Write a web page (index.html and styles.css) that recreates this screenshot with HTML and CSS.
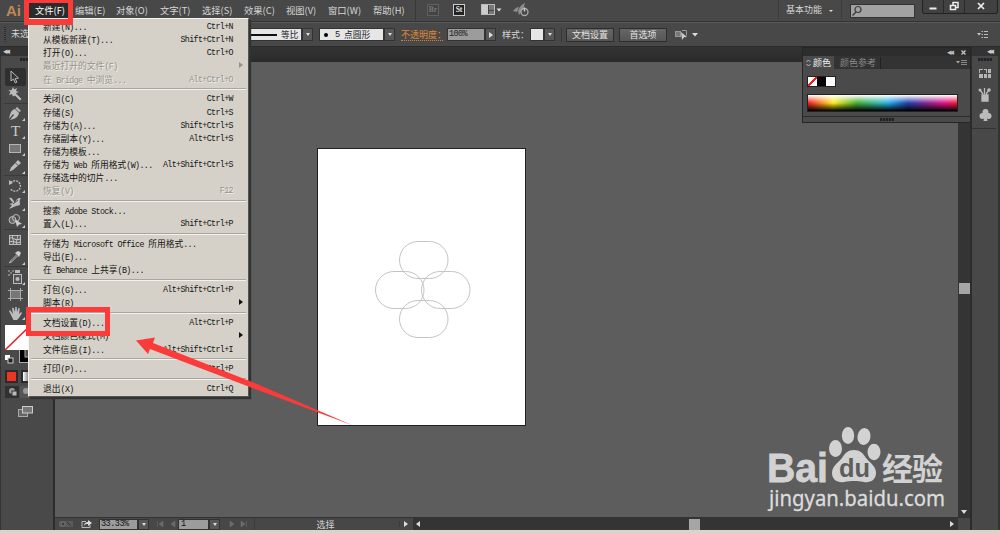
FILE: index.html
```html
<!DOCTYPE html>
<html lang="zh-CN">

<head>
    <meta charset="UTF-8">
    <meta name="viewport" content="width=device-width, initial-scale=1.0">
    <title>Ai</title>
    <link rel="stylesheet" href="styles.css">
</head>

<body>
    <div class="app">
        <header class="menubar">
            <div class="logo">Ai</div>
            <nav class="menus">
                <span class="open">文件(F)</span>
                <span>编辑(E)</span>
                <span>对象(O)</span>
                <span>文字(T)</span>
                <span>选择(S)</span>
                <span>效果(C)</span>
                <span>视图(V)</span>
                <span>窗口(W)</span>
                <span>帮助(H)</span>
            </nav>
            <div class="bar-icons">
                <span class="badge dim">Br</span>
                <span class="badge">St</span>
                <svg class="layout-icon" width="22" height="12" viewBox="0 0 22 12">
                    <rect x="0.5" y="0.5" width="13" height="10" fill="#777" stroke="#bbb"/>
                    <rect x="1" y="1" width="6" height="9" fill="#ccc"/>
                    <path d="M7.500 1v9M8 6.500h5" stroke="#444"/>
                    <path d="M15.500 4.500h5l-2.500 3z" fill="#ddd"/>
                </svg>
                <svg width="18" height="14" viewBox="0 0 18 14">
                    <path d="M0 8 Q3 4 6 4 L4 9zM5 8 Q7 2 12 0 L10 7 L6 12z" fill="#8e8e8e"/>
                    <circle cx="11.500" cy="9" r="3.500" fill="#4a4a4a" stroke="#aaa" stroke-width="1.300"/>
                    <path d="M11.500 4.500v4" stroke="#ccc" stroke-width="1.300"/>
                </svg>
            </div>
            <div class="workspace">基本功能<i class="down small"></i></div>
            <div class="search">
                <svg width="12" height="12" viewBox="0 0 12 12">
                    <circle cx="7" cy="4.500" r="3" fill="none" stroke="#3c3c3c" stroke-width="1.200"/>
                    <path d="M5 7 1.500 10.500" stroke="#3c3c3c" stroke-width="1.500"/>
                </svg>
            </div>
            <div class="window-buttons">
                <span><svg width="12" height="12" viewBox="0 0 12 12"><path d="M2.500 7.500h7" stroke="#eee" stroke-width="2"/></svg></span>
                <span><svg width="12" height="12" viewBox="0 0 12 12"><path d="M5 4V1.500h5v5H8M2.500 4.500h5v4h-5z" fill="none" stroke="#eee" stroke-width="1.500"/></svg></span>
                <span><svg width="12" height="12" viewBox="0 0 12 12"><path d="m3 2 6 6m0-6-6 6" stroke="#eee" stroke-width="1.700"/></svg></span>
            </div>
        </header>

        <div class="control">
            <i class="grip"></i>
            <span class="selection">未选</span>
            <div class="field stroke"><i class="line"></i>等比</div>
            <b class="drop"><i class="down"></i></b>
            <div class="field brush"><i class="dot"></i><span>5</span>点圆形</div>
            <b class="drop"><i class="down"></i></b>
            <span class="opacity">不透明度：</span>
            <div class="field percent">100%</div>
            <b class="drop"><i class="right"></i></b>
            <span class="style-label">样式：</span>
            <div class="field swatch"></div>
            <b class="drop"><i class="down"></i></b>
            <div class="buttons">
                <span>文档设置</span>
                <span>首选项</span>
            </div>
            <svg class="align-icon" width="24" height="12" viewBox="0 0 24 12">
                <rect x="0.500" y="2.500" width="5" height="5" fill="#777" stroke="#999"/>
                <path d="M7 1.500h4.500v5" stroke="#999" fill="none"/>
                <path d="m6 3 6 5-3 .3L7 11z" fill="#ccc"/>
                <path d="M17 4h6l-3 3.500z" fill="#ddd"/>
            </svg>
            <svg class="flyout" width="12" height="9" viewBox="0 0 12 9">
                <path d="M0 3h4L2 5.500z" fill="#ccc"/>
                <path d="M4.500 1.500h1.500M7 1.500h4M4.500 4.500h1.500M7 4.500h4M4.500 7.500h1.500M7 7.500h4" stroke="#bbb"/>
            </svg>
        </div>

        <div class="workarea">
            <aside class="tools">
                <div class="dock-head left">◂◂</div>
                <i class="handle"></i>
                <div class="tool active"><svg width="20" height="16" viewBox="0 0 20 16"><path d="M7 2v10l2.500-2 1.800 4 1.500-.8-1.600-3.700 3.300-.4z" fill="#333" stroke="#bbb"/></svg></div>
                <div class="tool"><svg width="20" height="16" viewBox="0 0 20 16"><path d="m8 1 1.200 2.500L12 2l-1 3 3 1-3 1 .5 1 5 5-1.500 1.500-5-5L8 10.500 7 8l-3 1 1.500-3L3.500 4l3 .2z" fill="#bdbdbd"/></svg></div>
                <hr>
                <div class="tool more"><svg width="20" height="16" viewBox="0 0 20 16"><path d="m12 1 4 4-2 1-3.500-3.500zM10 3l4 4c-1 4-4 6-9 7l4-5-1-1-4 5C5 8 6 4 10 3z" fill="#bdbdbd"/></svg></div>
                <div class="tool more type">T</div>
                <div class="tool more"><svg width="20" height="16" viewBox="0 0 20 16"><rect x="4.500" y="3.500" width="11" height="8" fill="#777" stroke="#b5b5b5"/></svg></div>
                <div class="tool more"><svg width="20" height="16" viewBox="0 0 20 16"><path d="m13 2 3 3-8 7-3.500 1.500L6 9.500z" fill="#bdbdbd"/><path d="m10 4.500 3 3" stroke="#555"/></svg></div>
                <hr>
                <div class="tool more"><svg width="20" height="16" viewBox="0 0 20 16"><path d="M5.500 4.500C11 0 17 5 15 10c-1.500 4-7 4-9.500 1" fill="none" stroke="#bbb" stroke-width="1.300" stroke-dasharray="2 1"/><path d="M4 2v5l4-2z" fill="#bbb"/></svg></div>
                <div class="tool more"><svg width="20" height="16" viewBox="0 0 20 16"><path d="M4 3c4-1 4 3 6 5 1-3 2-5 6-5-2 2-1 4-1 7l-4 1-7 3 3-4-3-1 4-1z" fill="#bdbdbd"/><path d="m8 9 5-4" stroke="#555"/></svg></div>
                <div class="tool more"><svg width="20" height="16" viewBox="0 0 20 16"><circle cx="7.500" cy="7" r="3.500" fill="#666" stroke="#bbb"/><circle cx="11" cy="5" r="3.500" fill="none" stroke="#bbb"/><path d="m10 6 7 5-3 .5L12 14z" fill="#ccc"/></svg></div>
                <hr>
                <div class="tool"><svg width="20" height="16" viewBox="0 0 20 16"><rect x="4.500" y="3.500" width="11" height="9" fill="#5e5e5e" stroke="#bbb"/><path d="M4 7c4-4 5 3 11 0M4 10c5-2 7 2 11 0M8 3c-2 4 2 5 0 9M12 3c2 4-2 5 0 9" fill="none" stroke="#ccc"/></svg></div>
                <div class="tool more"><svg width="20" height="16" viewBox="0 0 20 16"><path d="m10 4 4 4 1-2 1-2-2-2-2 .5z" fill="#ccc"/><path d="m11.500 6-6 6-1 2 2-1 6-6" fill="none" stroke="#bbb"/></svg></div>
                <hr>
                <div class="tool more"><svg width="20" height="16" viewBox="0 0 20 16"><rect x="8.500" y="5.500" width="8" height="9" fill="#555" stroke="#bbb"/><circle cx="12.500" cy="10" r="2" fill="#bbb"/><path d="M10 4V1h5v3z" fill="#bbb"/><path d="M3 2h2M7 2h2M5 4h2M3 6h2" stroke="#bbb"/></svg></div>
                <div class="tool"><svg width="20" height="16" viewBox="0 0 20 16"><rect x="6" y="5" width="9" height="7" fill="#777"/><path d="M3 4.500h15M3 12.500h15M5.500 2v13M15.500 2v13" stroke="#aaa"/></svg></div>
                <div class="tool more"><svg width="20" height="16" viewBox="0 0 20 16"><path d="m4 7 1-1 3 4-1-6 1.500-.3L10 8l.3-5h1.400L12 8l1.500-4 1.300.3L14 10l2-2 1 1-3 5-2 2H8.500z" fill="#bdbdbd"/></svg></div>
                <div class="colors">
                    <svg width="48" height="41" viewBox="0 0 48 41">
                        <rect x="14.500" y="15.500" width="26" height="23" fill="#000" stroke="#aaa"/>
                        <rect x="20" y="20" width="14" height="13" fill="#4a4a4a" stroke="#aaa"/>
                        <rect x="0" y="1" width="27" height="25" fill="#fff"/>
                        <path d="M0 26 27 0" stroke="#f01820" stroke-width="1.500"/>
                        <rect x="0" y="31" width="5" height="5" fill="#fff"/>
                        <rect x="3" y="34" width="5" height="5" fill="#222" stroke="#ccc"/>
                    </svg>
                </div>
                <div class="modes"><i class="red"></i><i class="grad"></i></div>
                <div class="draw"><svg width="48" height="12" viewBox="0 0 48 12"><path d="M0 0h14v12H0z" fill="#303030"/><path d="M15 0h28v12H15z" fill="#555"/><circle cx="7" cy="5" r="3" fill="#999"/><rect x="7" y="5" width="5" height="5" fill="#bbb" stroke="#333"/><circle cx="21" cy="5" r="3" fill="#999"/></svg></div>
                <svg class="screen-icon" width="18" height="14" viewBox="0 0 18 14">
                    <rect x="1.500" y="4.500" width="9" height="7" fill="#666" stroke="#aaa"/>
                    <rect x="5.500" y="1.500" width="10" height="6.500" fill="#777" stroke="#ccc"/>
                </svg>
            </aside>

            <main class="document">
                <div class="tabs"></div>
                <div class="stage">
                    <div class="canvas">
                        <svg class="artboard" width="210" height="279" viewBox="0 0 210 279">
                            <rect x="0.500" y="0.500" width="208" height="277" fill="#fff" stroke="#222"/>
                            <g fill="none" stroke="#c4c4c4" stroke-width="1">
                                <rect x="82.500" y="93.500" width="48.500" height="37" rx="18.500"/>
                                <rect x="58.500" y="123.500" width="48.500" height="37" rx="18.500"/>
                                <rect x="104.500" y="123.500" width="48.500" height="37" rx="18.500"/>
                                <rect x="82.500" y="152.500" width="48.500" height="37" rx="18.500"/>
                            </g>
                        </svg>
                    </div>
                    <div class="vscroll"><i class="thumb"></i><i class="down"></i></div>
                </div>
                <footer class="status">
                    <svg width="36" height="10" viewBox="0 0 36 10">
                        <path d="M2 2h14v6H2z" fill="#5b5b5b"/><circle cx="6" cy="5" r="2" fill="#3b3b3b" stroke="#777"/><path d="m10 3 4 4" stroke="#333"/>
                        <path d="M29 2.500h-4v6h8V6" fill="none" stroke="#bbb"/><path d="M27 7c0-3 2-4 4-4V1l4 3-4 3V5c-2 0-3 0-4 2z" fill="#ddd"/>
                    </svg>
                    <div class="field zoom">33.33%</div>
                    <b class="drop"><i class="down"></i></b>
                    <svg width="26" height="10" viewBox="0 0 26 10"><path d="M6.500 2v6M12 2v6L8 5zM24 2v6l-4-3z" fill="#6b6b6b" stroke="#6b6b6b" stroke-width=".6"/></svg>
                    <div class="field page">1</div>
                    <b class="drop"><i class="down"></i></b>
                    <svg width="32" height="10" viewBox="0 0 32 10"><path d="M8 2v6l4-3zM19 2v6l4-3zM24.500 2v6" fill="#6b6b6b" stroke="#6b6b6b" stroke-width=".6"/></svg>
                    <div class="current">选择</div>
                    <b class="next"><i class="right"></i></b>
                    <div class="hscroll"><i class="left-arrow"></i><i class="thumb"></i><i class="right"></i></div>
                    <i class="corner"></i>
                </footer>
            </main>

            <aside class="dock">
                <div class="dock-head">◂◂</div>
                <i class="handle"></i>
                <svg width="24" height="70" viewBox="0 0 24 70">
                    <rect x="7" y="8" width="12" height="9" fill="#b5b5b5"/>
                    <path d="M8 9h3v3H8zM12 9h2v3h-2z" fill="#444"/><path d="M11.500 8v9M15.500 8v9M7 12.500h12" stroke="#444"/>
                    <path d="M10 34h6v6h-6zM11 33 8 29M12.500 33v-6M14 33l3-4" fill="#bbb" stroke="#bbb" stroke-width="1.300"/>
                    <circle cx="8" cy="29" r="1.500" fill="#bbb"/><circle cx="17" cy="29" r="1.800" fill="#bbb"/>
                    <g fill="#bbb"><circle cx="13.500" cy="51" r="3"/><circle cx="10.500" cy="55" r="3"/><circle cx="16.500" cy="55" r="3"/><path d="M13 52h1l1.500 8h-4z"/></g>
                    <path d="M0 67.500h24" stroke="#333"/>
                </svg>
            </aside>
        </div>
        <div class="taskbar"></div>
    </div>

    <div class="color-panel">
        <div class="panel-head"><span>◂◂</span><svg width="7" height="7" viewBox="0 0 7 7"><path d="m1.500 1.500 4 4m0-4-4 4" stroke="#ccc" stroke-width="1.200"/></svg></div>
        <div class="panel-tabs">
            <span class="current-tab"><svg width="5" height="8" viewBox="0 0 5 8"><path d="M.5 3 2.500 1l2 2M.5 5l2 2 2-2" fill="none" stroke="#bbb"/></svg>颜色</span>
            <span class="tab">颜色参考</span>
            <svg width="12" height="7" viewBox="0 0 12 7"><path d="M0 2h4L2 4.500z" fill="#aaa"/><path d="M5 1.500h6M5 3.500h6M5 5.500h6" stroke="#888"/></svg>
        </div>
        <div class="swatches"><i class="none"></i><i class="black"></i><i class="white"></i></div>
        <div class="spectrum"></div>
        <div class="panel-foot"><i class="handle"></i></div>
    </div>

    <div class="watermark">
        <svg width="200" height="96" viewBox="0 0 200 96">
            <g fill="#d2d2d2">
                <text class="wm-brand" x="1" y="57.500" textLength="61" lengthAdjust="spacingAndGlyphs">Bai</text>
                <ellipse cx="69.500" cy="24.500" rx="6.500" ry="8.500"/>
                <ellipse cx="82" cy="11.500" rx="6.200" ry="8.500"/>
                <ellipse cx="98" cy="12.500" rx="6.500" ry="8.500" transform="rotate(10 98 12.500)"/>
                <ellipse cx="108" cy="28" rx="6.500" ry="8.300"/>
                <path d="M88 26c6 0 9 3 12 8 4 5 10 8 10 15 0 7-6 10-12 9-4-1-7-1-10-1s-6 0-10 1c-6 1-12-2-12-9s6-10 10-15c3-5 6-8 12-8z"/>
            </g>
            <text class="wm-du" x="73" y="53" textLength="31" lengthAdjust="spacingAndGlyphs">du</text>
            <text class="wm-cn" x="116" y="56" textLength="61">经验</text>
            <text class="wm-url" x="3" y="81.500" textLength="176" lengthAdjust="spacingAndGlyphs">jingyan.baidu.com</text>
        </svg>
    </div>

    <div class="file-menu">
        <div class="item"><span>新建<em>(N)...</em></span><kbd>Ctrl+N</kbd></div>
        <div class="item"><span>从模板新建<em>(T)...</em></span><kbd>Shift+Ctrl+N</kbd></div>
        <div class="item"><span>打开<em>(O)...</em></span><kbd>Ctrl+O</kbd></div>
        <div class="item disabled sub"><span>最近打开的文件<em>(F)</em></span></div>
        <div class="item disabled"><span>在<em> Bridge </em>中浏览<em>...</em></span><kbd>Alt+Ctrl+O</kbd></div>
        <div class="sep"></div>
        <div class="item"><span>关闭<em>(C)</em></span><kbd>Ctrl+W</kbd></div>
        <div class="item"><span>存储<em>(S)</em></span><kbd>Ctrl+S</kbd></div>
        <div class="item"><span>存储为<em>(A)...</em></span><kbd>Shift+Ctrl+S</kbd></div>
        <div class="item"><span>存储副本<em>(Y)...</em></span><kbd>Alt+Ctrl+S</kbd></div>
        <div class="item"><span>存储为模板<em>...</em></span></div>
        <div class="item"><span>存储为<em> Web </em>所用格式<em>(W)...</em></span><kbd>Alt+Shift+Ctrl+S</kbd></div>
        <div class="item"><span>存储选中的切片<em>...</em></span></div>
        <div class="item disabled"><span>恢复<em>(V)</em></span><kbd>F12</kbd></div>
        <div class="sep"></div>
        <div class="item"><span>搜索<em> Adobe Stock...</em></span></div>
        <div class="item"><span>置入<em>(L)...</em></span><kbd>Shift+Ctrl+P</kbd></div>
        <div class="sep"></div>
        <div class="item"><span>存储为<em> Microsoft Office </em>所用格式<em>...</em></span></div>
        <div class="item"><span>导出<em>(E)...</em></span></div>
        <div class="item"><span>在<em> Behance </em>上共享<em>(B)...</em></span></div>
        <div class="sep"></div>
        <div class="item"><span>打包<em>(G)...</em></span><kbd>Alt+Shift+Ctrl+P</kbd></div>
        <div class="item sub"><span>脚本<em>(R)</em></span></div>
        <div class="sep"></div>
        <div class="item"><span>文档设置<em>(D)...</em></span><kbd>Alt+Ctrl+P</kbd></div>
        <div class="item sub"><span>文档颜色模式<em>(M)</em></span></div>
        <div class="item"><span>文件信息<em>(I)...</em></span><kbd>Alt+Shift+Ctrl+I</kbd></div>
        <div class="sep"></div>
        <div class="item"><span>打印<em>(P)...</em></span><kbd>Ctrl+P</kbd></div>
        <div class="sep"></div>
        <div class="item"><span>退出<em>(X)</em></span><kbd>Ctrl+Q</kbd></div>
    </div>

    <div class="mark mark-file"></div>
    <div class="mark mark-setup"></div>
    <svg class="arrow" width="220" height="92" viewBox="0 0 220 92">
        <path d="M1 5.500 20 2.500 18 8 122 49 218 90.500 120 54 15 14 13 19z" fill="#fb3a3a"/>
    </svg>
</body>

</html>
```
FILE: styles.css
```css
body {
    margin: 0;
    overflow: hidden;
    font-family: "Noto Sans CJK SC", sans-serif;
    font-size: 9px;
    line-height: 12px;
    color: #d6d6d6;
}

svg {
    display: block;
    flex: none;
}

i, em {
    font-style: normal;
}

.app {
    display: flex;
    flex-direction: column;
    width: 1000px;
    height: 533px;
    background-color: #484848;
}

/* menu bar */
.menubar {
    display: flex;
    flex: none;
    height: 22px;
    border-bottom: 1px solid #333;
    box-sizing: border-box;
}

.logo {
    width: 29px;
    padding-left: 6px;
    box-sizing: border-box;
    font: bold 15px/21px "Liberation Sans", sans-serif;
    color: #c38659;
}

.menus {
    display: grid;
    grid-template-columns: 40px 41px 44px 42px 42px 42px 42px 45px 48px;
    font-size: 9.3px;
    line-height: 20px;
}

.menus span {
    padding-left: 6px;
    white-space: nowrap;
}

.menus .open {
    background-color: #2b2b2b;
    color: #fff;
}

.bar-icons {
    display: flex;
    align-items: center;
    height: 20px;
    width: 270px;
    border-left: 1px solid #383838;
    padding-left: 11px;
}

.badge {
    width: 10px;
    height: 10px;
    margin-right: 14px;
    border: 1px solid #ccc;
    background-color: #222;
    font: bold 7.5px/10px "Liberation Serif", serif;
    text-align: center;
    color: #eee;
}

.badge.dim {
    border-color: #606060;
    background-color: #444;
    color: #777;
}

.layout-icon {
    margin: 0 10px 0 2px;
}

.workspace {
    display: flex;
    align-items: center;
    width: 64px;
    height: 19px;
    border-left: 1px solid #3a3a3a;
    border-right: 1px solid #3a3a3a;
    padding-left: 7px;
    margin-left: auto;
    box-sizing: border-box;
}

.workspace .down {
    margin: 3px 0 0 7px;
}

.search {
    width: 65px;
    height: 14px;
    margin: 4px 7px 0 8px;
    background-color: #a2a2a2;
    border: 1px solid #333;
    box-sizing: border-box;
}

.window-buttons {
    display: flex;
    height: 13px;
    margin-right: 2px;
    border: 1px solid #222;
    border-top: 0;
    border-radius: 0 0 3px 3px;
    background-color: #414141;
}

.window-buttons span {
    width: 20px;
    padding-top: 1px;
    border-right: 1px solid #2a2a2a;
    display: flex;
    justify-content: center;
}

.window-buttons span:last-child {
    width: 32px;
    border-right: 0;
}

/* arrows used in drop buttons and scroll bars */
.down {
    border: 2.5px solid transparent;
    border-top: 3px solid #ddd;
    border-bottom: 0;
}

.down.small {
    border-width: 2px;
    border-top-width: 2px;
    border-bottom: 0;
}

.right {
    border: 3px solid transparent;
    border-left: 4px solid #ddd;
    border-right: 0;
}

.left-arrow {
    border: 3px solid transparent;
    border-right: 4px solid #ddd;
    border-left: 0;
}

/* control bar */
.control {
    display: flex;
    flex: none;
    align-items: center;
    height: 25px;
    border-top: 1px solid #595959;
    border-bottom: 1px solid #2a2a2a;
    box-sizing: border-box;
    white-space: nowrap;
}

.grip {
    width: 2px;
    height: 15px;
    margin: 0 5px 0 4px;
    background: repeating-linear-gradient(#2d2d2d 0 1px, #4a4a4a 1px 2px);
}

.selection {
    width: 233px;
    line-height: 10px;
    margin-bottom: 2px;
}

.field {
    display: flex;
    align-items: center;
    height: 13px;
    border: 1px solid #333;
    box-sizing: border-box;
    background-color: #e6e6e6;
    color: #222;
    font-size: 8.7px;
}

.stroke {
    width: 58px;
}

.line {
    width: 32px;
    height: 2px;
    margin-right: 4px;
    background-color: #111;
}

.drop {
    display: flex;
    align-items: center;
    justify-content: center;
    width: 11px;
    height: 13px;
    border: 1px solid #333;
    box-sizing: border-box;
    background-color: #575757;
}

.brush {
    width: 65px;
    margin-left: 6px;
}

.brush span {
    width: 9px;
    font-family: "Liberation Mono", monospace;
}

.dot {
    width: 4px;
    height: 4px;
    margin: 0 7px 0 4px;
    border-radius: 50%;
    background-color: #000;
}

.opacity {
    width: 42px;
    height: 11px;
    margin: 0 4px 0 6px;
    line-height: 11px;
    border-bottom: 1px dotted #d8802c;
    font-size: 9px;
    color: #e08a35;
}

.percent {
    width: 38px;
    padding-left: 1px;
    background-color: #9c9c9c;
    font: 8.5px/11px "Liberation Mono", monospace;
    letter-spacing: -.6px;
}

.style-label {
    width: 28px;
    margin-left: 6px;
}

.swatch {
    width: 14px;
}

.buttons {
    display: flex;
    gap: 5px;
    margin-left: 6px;
    padding-left: 4px;
    border-left: 1px solid #383838;
}

.buttons span {
    width: 46px;
    height: 12px;
    border: 1px solid #2d2d2d;
    background: linear-gradient(#666, #555);
    line-height: 12px;
    text-align: center;
    color: #e2e2e2;
}

.align-icon {
    margin-left: 8px;
}

.flyout {
    margin: 0 11px 0 auto;
}

/* tools */
.workarea {
    display: flex;
    flex: none;
    height: 483px;
}

.tools {
    display: flex;
    flex-direction: column;
    width: 52px;
    border-left: 1px solid #333;
    background-color: #494949;
}

.dock-head {
    height: 9px;
    background-color: #333;
    font: 9px/9px "DejaVu Sans", sans-serif;
    letter-spacing: -2px;
    text-align: right;
    padding-right: 6px;
    color: #ccc;
}

.dock-head.left {
    text-align: left;
    padding: 0 0 0 2px;
}

.handle {
    width: 14px;
    height: 3px;
    margin: 2px auto 0;
    background: repeating-linear-gradient(90deg, #222 0 2px, #3a3a3a 2px 3px);
}

.tool {
    position: relative;
    width: 21px;
    height: 17.5px;
    margin-left: 4px;
    display: flex;
    flex: none;
    align-items: center;
}

.tools .handle + .tool {
    margin-top: 7px;
}

.tool.active {
    background-color: #2f2f2f;
    border-radius: 2px;
}

.tool.active svg {
    margin-left: -1px;
}

.more::after {
    content: "";
    position: absolute;
    right: 1px;
    bottom: 1px;
    border-left: 3px solid transparent;
    border-bottom: 3px solid #ccc;
}

.type {
    justify-content: center;
    font: 15px/17px "Liberation Serif", serif;
    color: #ccc;
}

.tools hr {
    width: 48px;
    height: 1px;
    flex: none;
    margin: 0 0 .9px 3px;
    border: 0;
    background-color: #3a3a3a;
}

.colors {
    margin: 3px 0 0 4px;
}

.modes {
    display: flex;
    gap: 3px;
    margin: 5px 0 0 4px;
}

.modes i {
    width: 9px;
    height: 9px;
    border: 2px solid #2b2b2b;
}

.red {
    background-color: #ee3524;
}

.grad {
    background: linear-gradient(90deg, #fff, #333);
}

.draw {
    margin: 3px 0 0 4px;
}

.screen-icon {
    margin: 7px 0 0 16px;
}

/* document */
.document {
    display: flex;
    flex-direction: column;
    flex: 1;
    border-left: 2px solid #2c2c2c;
    border-right: 2px solid #2c2c2c;
    min-width: 0;
}

.tabs {
    height: 15px;
    background: linear-gradient(#343434, #2a2a2a);
}

.stage {
    display: flex;
    height: 455px;
}

.canvas {
    flex: 1;
    padding: 86px 0 0 262px;
    background-color: #5d5d5d;
}

.vscroll {
    display: flex;
    flex-direction: column;
    align-items: center;
    justify-content: space-between;
    width: 12px;
    padding: 221px 0 3px;
    box-sizing: border-box;
    background-color: #343434;
}

.thumb {
    width: 11px;
    height: 11px;
    background-color: #a5a5a5;
}

.vscroll .down {
    border-width: 4px 3.5px 0;
}

.status {
    display: flex;
    align-items: center;
    height: 13px;
    background-color: #474747;
    border-top: 1px solid #333;
    box-sizing: border-box;
}

.status svg {
    margin-left: 2px;
}

.status .field {
    height: 11px;
    background-color: #9c9c9c;
    color: #111;
    font: 8.5px/10px "Liberation Mono", monospace;
    letter-spacing: -.5px;
}

.status .drop {
    height: 11px;
}

.status .zoom {
    width: 39px;
    margin-left: 6px;
    padding-left: 1px;
}

.status .page {
    width: 31px;
    margin-left: 1px;
    padding-left: 2px;
}

.current {
    width: 145px;
    padding: 1px 3px 0 0;
    text-align: center;
    border-left: 1px solid #3b3b3b;
    box-sizing: border-box;
}

.next {
    width: 14px;
    padding-left: 4px;
    box-sizing: border-box;
    border-left: 1px solid #3b3b3b;
}

.next i {
    display: block;
    width: 0;
}

.hscroll {
    display: flex;
    flex: 1;
    align-items: center;
    justify-content: space-between;
    height: 12px;
    padding: 0 4px 0 3px;
    background-color: #343434;
}

.hscroll .thumb {
    margin-left: 18px;
}

.corner {
    width: 12px;
}

.dock {
    width: 26px;
    border-right: 2px solid #333;
    background-color: #484848;
}

.dock .handle {
    display: block;
}

.taskbar {
    height: 3px;
    background-color: #d8d4ca;
}

/* floating colour panel */
.color-panel {
    position: absolute;
    left: 802px;
    top: 47px;
    width: 169px;
    height: 76px;
    border: 1px solid #262626;
    box-sizing: border-box;
    background-color: #4a4a4a;
}

.panel-head {
    display: flex;
    justify-content: flex-end;
    align-items: center;
    gap: 8px;
    height: 8px;
    padding-right: 3px;
    background-color: #2d2d2d;
    font: 9px/8px "DejaVu Sans", sans-serif;
    letter-spacing: -2px;
    color: #bbb;
}

.panel-tabs {
    display: flex;
    align-items: center;
    height: 13px;
    background-color: #333;
}

.current-tab {
    display: flex;
    align-items: center;
    gap: 2px;
    width: 31px;
    height: 13px;
    padding-left: 3px;
    box-sizing: border-box;
    background-color: #4a4a4a;
    color: #eee;
}

.tab {
    width: 40px;
    padding-left: 6px;
    border-right: 1px solid #222;
    color: #8a8a8a;
}

.panel-tabs > svg {
    margin: 0 2px 0 auto;
}

.swatches {
    display: flex;
    width: 29px;
    margin: 7px 0 0 4px;
    border: 1px solid #222;
    box-sizing: border-box;
}

.swatches i {
    flex: 1;
    height: 9px;
    background-color: #fff;
}

.swatches .none {
    background: linear-gradient(to bottom right, #fff 42%, #ee2020 43% 57%, #fff 58%);
}

.swatches .black {
    background-color: #080304;
}

.spectrum {
    height: 18px;
    width: 151px;
    margin: 7px 0 0 4px;
    border: 1px solid #222;
    box-sizing: border-box;
    background:
        linear-gradient(rgba(255,255,255,1), rgba(255,255,255,0) 50%, rgba(0,0,0,0) 50%, rgba(0,0,0,1)),
        linear-gradient(90deg, #ed1c24, #ffed20 17%, #43ad35 33%, #37b7b0 48%, #24aeea 54%, #2441ad 67%, #792b95 78%, #e41586 92%, #ed1c35);
}

.panel-foot {
    display: flex;
    margin-top: 4px;
    border-top: 1px solid #2b2b2b;
}

.panel-foot .handle {
    margin-top: 1px;
}

/* File menu */
.file-menu {
    position: absolute;
    left: 28px;
    top: 18px;
    width: 221px;
    height: 379px;
    padding-top: 1px;
    border: 1px solid #f4f2ee;
    border-right-color: #555;
    border-bottom-color: #555;
    box-sizing: border-box;
    background-color: #d5d1c8;
    box-shadow: 2px 2px 1px #333;
    color: #141414;
    font-size: 8.77px;
}

.item {
    position: relative;
    display: flex;
    justify-content: space-between;
    height: 13.15px;
    padding: 0 15px 0 14px;
    line-height: 13.15px;
    white-space: pre;
}

.item em, kbd {
    font: 8.3px/13px "Liberation Mono", monospace;
    letter-spacing: -.6px;
}

.disabled {
    color: #96938d;
    text-shadow: 1px 1px #f0eee9;
}

.sub::after {
    content: "";
    position: absolute;
    right: 5px;
    top: 3px;
    border: 3px solid transparent;
    border-left: 4px solid #111;
    border-right: 0;
}

.sub.disabled::after {
    border-left-color: #96938d;
}

.sep {
    height: 1px;
    margin: 2.6px 2px 2.1px;
    border-top: 1px solid #aaa69f;
    background-color: #f3f1ed;
}

.watermark {
    position: absolute;
    left: 766px;
    top: 424px;
}

.wm-brand {
    font: bold 41px "Liberation Sans", sans-serif;
    stroke: #d2d2d2;
    stroke-width: .8px;
}

.wm-du {
    font: bold 25px "Liberation Sans", sans-serif;
    fill: #5d5d5d;
}

.wm-cn {
    font: bold 31px "Noto Sans CJK SC", sans-serif;
    fill: #d2d2d2;
}

.wm-url {
    font: 21px "Noto Sans", sans-serif;
    fill: #dcdcdc;
    stroke: #dcdcdc;
    stroke-width: .3px;
}

/* highlight boxes and arrow */
.mark {
    position: absolute;
    border: 5px solid #fb3a3a;
    box-sizing: border-box;
}

.mark-file {
    left: 24px;
    top: -2px;
    width: 49px;
    height: 27px;
    border-bottom-width: 6px;
}

.mark-setup {
    left: 26px;
    top: 307px;
    width: 84px;
    height: 29px;
}

.arrow {
    position: absolute;
    left: 135px;
    top: 335px;
}
```
